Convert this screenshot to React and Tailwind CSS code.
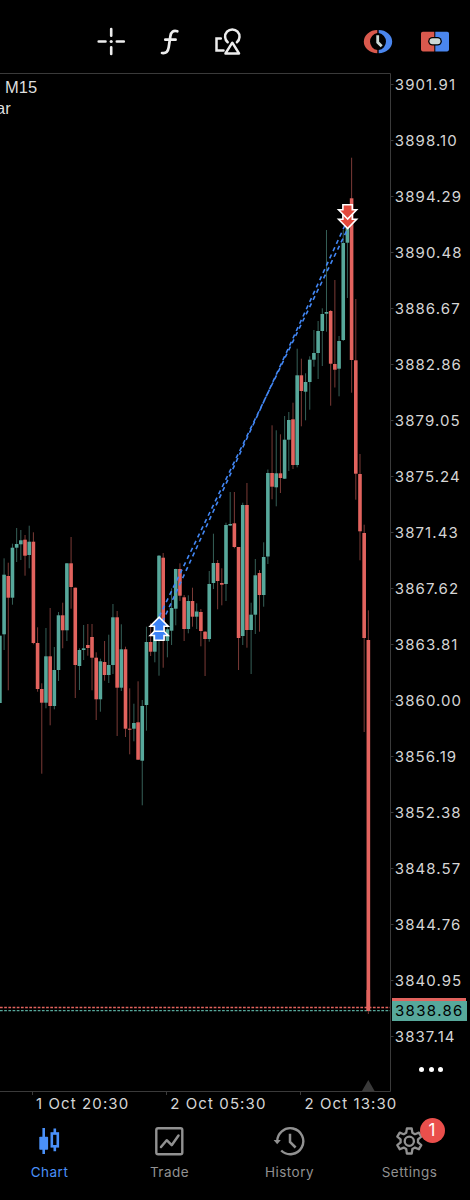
import { useState } from "react";

// ── Chart geometry ─────────────────────────────────────────────────────────────
const BAR_STEP = 4.187;
const BAR_WIDTH = 3.6;
const CHART_TOP = 73;

// [direction, high, body top, body bottom, low]
const CANDLES = [
  ["up", 635.7, 635.7, 703, 703],
  ["up", 558.3, 574.7, 634.3, 650],
  ["down", 562.7, 576, 597.7, 690.3],
  ["up", 543.7, 547.7, 597.7, 604.7],
  ["up", 528, 544, 547.7, 562],
  ["up", 530, 540.3, 544.3, 560],
  ["down", 535, 539.7, 555.7, 575.7],
  ["up", 525.7, 541.7, 555, 568.3],
  ["down", 532.3, 541.7, 643, 644.3],
  ["down", 627.3, 643, 689, 691.7],
  ["down", 683.3, 689, 702.7, 773.7],
  ["up", 628, 656.3, 702.7, 708.3],
  ["down", 608, 656.3, 706, 725.3],
  ["up", 647, 670, 706, 709.3],
  ["up", 612, 615.3, 670, 681],
  ["down", 602.7, 615.3, 630.3, 648.3],
  ["up", 563, 563.3, 630.3, 641],
  ["down", 537, 563.3, 587, 608.7],
  ["down", 587.5, 587.7, 665, 698],
  ["up", 648.3, 650, 666, 690],
  ["up", 625, 648.3, 650, 660],
  ["down", 624, 645, 648, 655.7],
  ["down", 624, 637, 657.7, 690.3],
  ["down", 652.3, 657.7, 699.3, 720],
  ["up", 658.7, 661.3, 699.3, 711.7],
  ["down", 641, 662, 675, 680.7],
  ["up", 634.7, 665, 675, 683],
  ["up", 604, 617.3, 665, 674],
  ["down", 611, 617.3, 687.7, 736],
  ["up", 624.3, 649.3, 687.7, 691],
  ["down", 646.7, 649.3, 728.7, 737],
  ["down", 688.3, 728.7, 729.7, 754.3],
  ["up", 703.7, 723, 728.7, 741.3],
  ["down", 681.3, 722.3, 759.7, 760],
  ["up", 700, 706, 760.7, 805.3],
  ["up", 626.7, 642, 705, 730.7],
  ["down", 623.3, 642, 651.7, 656],
  ["up", 630, 634, 651.7, 662.3],
  ["up", 555, 555.7, 636, 675.7],
  ["down", 553, 557.7, 640, 667.7],
  ["up", 626.7, 629.3, 641, 657.3],
  ["up", 588.3, 608, 630.7, 645],
  ["up", 568.7, 569, 608.7, 625.3],
  ["down", 563.3, 569, 595.7, 601],
  ["down", 595, 597.3, 629, 641],
  ["up", 595.3, 601, 629, 633.3],
  ["down", 587.7, 601, 616.7, 626.7],
  ["up", 603.3, 611.5, 616.7, 629],
  ["down", 609, 612, 631, 646.3],
  ["down", 631, 631.7, 639, 676],
  ["up", 571, 584, 639, 641.7],
  ["up", 533.7, 563, 583, 589],
  ["down", 560, 563, 581, 609.3],
  ["down", 568.3, 583, 584.7, 605.3],
  ["up", 522.7, 525, 584, 601],
  ["up", 492, 524, 525.5, 526],
  ["down", 492, 523.3, 547, 548.3],
  ["down", 547, 547, 638, 670],
  ["up", 502.7, 505, 636, 645],
  ["down", 483, 505, 630, 647.7],
  ["up", 602.7, 614.7, 630, 674],
  ["up", 559, 575.3, 614.7, 634],
  ["down", 570, 573, 595, 631.7],
  ["up", 542.3, 557, 595, 606.7],
  ["up", 469.5, 473, 556.5, 564],
  ["down", 425.3, 473, 486.7, 499.3],
  ["up", 430.3, 473.3, 487.3, 506.3],
  ["down", 434.3, 473.3, 478, 493],
  ["up", 416, 439.7, 478.7, 479],
  ["up", 412, 420, 439.7, 471],
  ["down", 402.7, 419.3, 465, 469],
  ["up", 348.7, 375.3, 465, 467.3],
  ["down", 358.7, 375.3, 391, 426.3],
  ["up", 373.3, 382, 391.7, 420.3],
  ["up", 356.3, 359.7, 382, 409.7],
  ["up", 330, 353, 359.7, 366.7],
  ["up", 321, 331, 353, 379],
  ["up", 308.3, 314, 331, 366],
  ["up", 230, 312, 313.7, 331.7],
  ["down", 310, 311, 363.7, 405.7],
  ["down", 280, 364, 369.7, 387.5],
  ["up", 336, 341, 368.7, 396.3],
  ["up", 230, 243, 340, 341],
  ["up", 218, 220, 242.7, 298],
  ["down", 157.7, 198.3, 360, 392.7],
  ["down", 299, 360.3, 473.7, 499.7],
  ["down", 454, 474, 531.3, 560.3],
  ["down", 524.7, 533, 638, 732],
  ["down", 610.3, 640, 1011, 1014],
];

const CANDLE_COLORS = {
  up: { body: "#57a89b", wick: "#355f57" },
  down: { body: "#e2635e", wick: "#7a3a36" },
};

const PRICES = [
  "3901.91", "3898.10", "3894.29", "3890.48", "3886.67", "3882.86",
  "3879.05", "3875.24", "3871.43", "3867.62", "3863.81", "3860.00",
  "3856.19", "3852.38", "3848.57", "3844.76", "3840.95", "3837.14",
];

const TIMES = ["1 Oct 20:30", "2 Oct 05:30", "2 Oct 13:30"];

// ── Tab bar items ──────────────────────────────────────────────────────────────
const TABS = [
  {
    id: "chart",
    label: "Chart",
    icon: (
      <svg className="w-8 h-8" viewBox="0 0 32 32" fill="none" stroke="currentColor">
        <path strokeWidth={2.6} d="M10.7 3v26M21.8 3.5v5M21.8 21v5.2" />
        <rect x="6.3" y="11.8" width="8.8" height="13" rx="0.8" fill="currentColor" stroke="none" />
        <rect x="18.8" y="8.5" width="6" height="12.8" strokeWidth={2.6} />
      </svg>
    ),
  },
  {
    id: "trade",
    label: "Trade",
    icon: (
      <svg className="w-8 h-8" viewBox="0 0 32 32" fill="none" stroke="currentColor">
        <rect x="3.3" y="3.3" width="26" height="26" rx="1.8" strokeWidth={2.4} />
        <path strokeWidth={2.5} strokeLinecap="round" strokeLinejoin="round" d="M8 22l5.7-6.8 5 5L25.5 10.5" />
      </svg>
    ),
  },
  {
    id: "history",
    label: "History",
    icon: (
      <svg className="w-8 h-8" viewBox="0 0 32 32" fill="none" stroke="currentColor">
        <path strokeWidth={2.4} d="M4.3 17A13 13 0 1 1 8.2 25.5" />
        <path d="M.6 15h7.2l-3.6 4.3z" fill="currentColor" stroke="none" />
        <path strokeWidth={2.5} d="M17 8.700v8.200l5.600 5.600" />
      </svg>
    ),
  },
  {
    id: "settings",
    label: "Settings",
    badge: 1,
    icon: (
      <svg className="w-8 h-8" viewBox="0 0 32 32" fill="none" stroke="currentColor" strokeWidth={2.3} strokeLinejoin="round">
        <path d="M13.9 3.5h4.800l.7 4.300 2.500 1.400 4-1.600 2.400 4.100-3.300 2.700v3l3.300 2.700-2.400 4.100-4-1.600-2.500 1.400-.7 4.500h-4.800l-.7-4.500-2.500-1.400-4 1.600-2.400-4.100 3.300-2.700v-3L4.300 11.700l2.400-4.100 4 1.600 2.500-1.400z" />
        <circle cx="16.3" cy="16.2" r="4.600" />
      </svg>
    ),
  },
];

const Toolbar = () => (
  <header className="flex h-[73px] shrink-0 items-start justify-between pt-[25px] pl-[95px] pr-[19px] text-[#ededed]">
    <div className="flex gap-[26.5px]">
      <button aria-label="Crosshair">
        <svg className="w-8 h-8" viewBox="0 0 32 32" fill="none" stroke="currentColor" strokeWidth={2.6} strokeLinecap="round">
          <path d="M16.2 4v6.7M16.2 22.2v6.8M3.700 16.500h6.800M21.800 16.500h7" />
          <circle cx="16.2" cy="16.5" r="1.600" fill="currentColor" stroke="none" />
        </svg>
      </button>
      <button aria-label="Indicators">
        <svg className="w-8 h-8" viewBox="0 0 32 32" fill="none" stroke="currentColor" strokeWidth={2.7} strokeLinecap="round">
          <path d="M23.300 6.300c-3.900-1.200-6.200.5-6.900 4.700l-1.700 11.300c-.6 4.200-2.600 6.300-6.700 5.700M11.300 14.700h10.300" />
        </svg>
      </button>
      <button aria-label="Objects">
        <svg className="w-8 h-8" viewBox="0 0 32 32" fill="none" stroke="currentColor" strokeWidth={2.5} strokeLinecap="round">
          <path d="M15.700 17.200a7.200 7.200 0 1 1 9.200 0" />
          <path d="M20.300 17.700l6.700 10.700H13.500z" strokeLinejoin="round" />
          <path d="M8.800 13.500H4.500v12h7" />
        </svg>
      </button>
    </div>

    <div className="flex gap-[25px]">
      <button aria-label="Trading sessions">
        <svg className="w-8 h-8" viewBox="0 0 32 32">
          <path d="M15.300 5A13.500 11.600 0 0 0 15.300 28.200v-3.100a8.600 8.600 0 0 1 0-17z" fill="#d9594d" />
          <path d="M16.700 5A13.500 11.600 0 0 1 16.700 28.200v-3.100a8.600 8.600 0 0 0 0-17z" fill="#4a86ee" />
          <path d="M15.700 10.300v7l4 4" fill="none" stroke="#cbd8d5" strokeWidth={2.8} />
        </svg>
      </button>
      <button aria-label="One click trading">
        <svg className="w-8 h-8" viewBox="0 0 32 32">
          <path d="M15.300 6.800H3.800a1.800 1.800 0 0 0-1.800 1.800v16a1.800 1.800 0 0 0 1.800 1.800h11.500z" fill="#d9594d" />
          <path d="M16.300 6.800h11.900a1.800 1.800 0 0 1 1.800 1.800v16a1.800 1.800 0 0 1-1.800 1.800H16.300z" fill="#4a86ee" />
          <rect x="9.200" y="12" width="13.600" height="8.600" rx="4.300" fill="#000" />
          <rect x="10.500" y="13.300" width="11" height="6" rx="3" fill="#cbd8d5" />
        </svg>
      </button>
    </div>
  </header>
);

const Candles = () =>
  CANDLES.map(([dir, high, top, bottom, low], i) => {
    const x = i * BAR_STEP - 0.1;
    const { body, wick } = CANDLE_COLORS[dir];
    return (
      <g key={i}>
        <rect x={x - 0.5} y={high} width={1} height={low - high} fill={wick} />
        <rect x={x - BAR_WIDTH / 2} y={top} width={BAR_WIDTH} height={bottom - top} fill={body} />
      </g>
    );
  });

const PlotArea = () => (
  <svg className="block h-[1024px] w-[394px]" viewBox={`0 ${CHART_TOP} 394 1024`} fill="none">
    <Candles />

    {/* bid / ask */}
    <path d="M0 1007.5H390" stroke="#e2635e" strokeWidth={1.5} strokeDasharray="2.700 1.490" />
    <path d="M0 1010.700H390" stroke="#57a89b" strokeWidth={1.300} strokeDasharray="2.700 1.490" />
    <rect x="366.500" y="990" width="3.600" height="21" fill="#e2635e" />

    {/* frame and ticks */}
    <path d="M0 73.500H390.500V1091.500H0" stroke="#3a3a3a" />
    {PRICES.map((price, i) => (
      <path key={price} d={`M390.500 ${84.500 + i * 56}h3`} stroke="#3a3a3a" />
    ))}
    <path d="M32.500 1091v4M166.500 1091v4M300.500 1091v4" stroke="#3a3a3a" />
    <path d="M368.300 1080l6.300 11h-12.600z" fill="#3a3a3a" />

    {/* closed deals */}
    <g stroke="#4287f5" strokeWidth={1.600} strokeDasharray="4.200 3.800">
      <path d="M159.200 616.500L347.600 229" />
      <path d="M159.200 629L347.600 219.500" />
    </g>
    <g fill="#3b82f6" stroke="#fff" strokeWidth={1.600}>
      <path d="M159.200 626.500l9 9h-4.200v4.700h-9.600v-4.700h-4.200z" />
      <path d="M159.200 617.200l9 9h-4.200v5h-9.600v-5h-4.200z" />
    </g>
    <g fill="#e2483c" stroke="#fff" strokeWidth={1.600}>
      <path d="M347.600 228.500l-9-9.300h4.300v-5h9.400v5h4.300z" />
      <path d="M347.600 219l-9-9.300h4.300v-5h9.400v5h4.300z" />
    </g>
  </svg>
);

const PriceScale = () => (
  <div className="relative flex-1 text-[15px] tracking-[1.080px] text-[#d6d6d6]">
    <div className="flex flex-col gap-8 pl-[0.800px]">
      {PRICES.map((price) => (
        <span key={price} className="h-6 leading-[23px]">{price}</span>
      ))}
    </div>
    {/* ask sits behind the bid marker */}
    <div className="absolute -left-0.5 top-[924.500px] h-5 w-[74px] bg-[#e2635e]" />
    <div className="absolute -left-0.5 top-[928px] h-5 w-[75px] bg-[#57a89b] pl-[3px] leading-5 tracking-[1.350px] text-black">
      3838.86
    </div>
    <button aria-label="More" className="absolute left-[25px] top-[994px] flex gap-[4.700px]">
      <i className="size-[5px] rounded-full bg-white" />
      <i className="size-[5px] rounded-full bg-white" />
      <i className="size-[5px] rounded-full bg-white" />
    </button>
  </div>
);

const App = () => {
  const [activeTab, setActiveTab] = useState("chart");

  return (
    <div className="flex h-[1200px] w-[470px] flex-col overflow-hidden bg-black font-['Inter',sans-serif]">
      <Toolbar />

      <main className="relative flex h-[1020px] shrink-0">
        <PlotArea />
        <PriceScale />
        <div className="absolute left-0 top-[4px] font-['Liberation_Sans',sans-serif] text-[16.500px] leading-[21px] text-[#dedede]">
          <p className="pl-[5px]">M15</p>
          <p className="-ml-[4px]">ar</p>
        </div>
      </main>

      <div className="flex h-[22px] shrink-0 pl-[36px] text-[15px] leading-[21px] tracking-[1.100px] text-[#d6d6d6]">
        {TIMES.map((time) => (
          <span key={time} className="w-[134.200px] shrink-0 whitespace-nowrap">{time}</span>
        ))}
      </div>

      {/* ── Tab bar ───────────────────────────────────────────────────────── */}
      <nav className="-ml-[11px] flex w-[480px] shrink-0 pt-[10px]">
        {TABS.map((tab) => (
          <button
            key={tab.id}
            onClick={() => setActiveTab(tab.id)}
            className={`flex w-[120px] flex-col items-center ${activeTab === tab.id ? "text-[#4a90f8]" : "text-[#919191]"}`}
          >
            <span className="relative">
              {tab.icon}
              {tab.badge && (
                <span className="absolute -top-[7px] left-[26.500px] flex size-[25px] items-center justify-center rounded-full bg-[#ea4f4c] text-[17px] text-white">
                  {tab.badge}
                </span>
              )}
            </span>
            <span className="mt-[5px] pl-[1px] text-[13.500px] leading-5 tracking-[0.500px]">{tab.label}</span>
          </button>
        ))}
      </nav>
    </div>
  );
};

export default App;
